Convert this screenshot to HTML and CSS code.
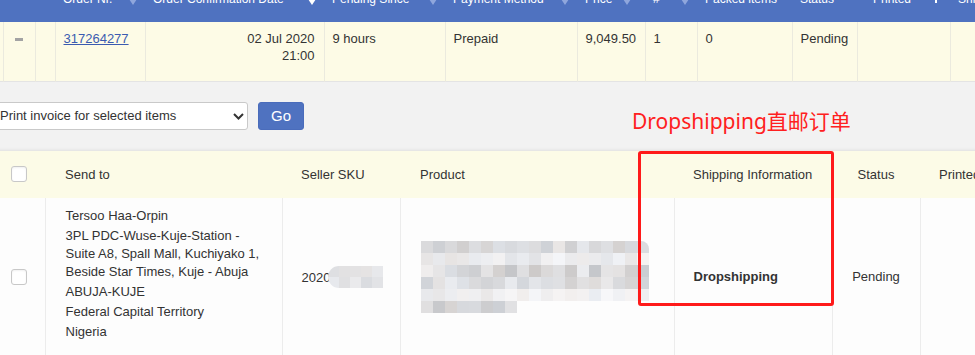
FILE: index.html
```html
<!DOCTYPE html>
<html lang="en">
  <head>
    <meta charset="UTF-8" />
    <meta name="viewport" content="width=device-width, initial-scale=1.0" />
    <title>Pending Orders</title>
    <link rel="stylesheet" href="styles.css">
  </head>
  <body>
    <div class="page">
      <table class="orders">
        <colgroup>
          <col style="width: 23px" /><col style="width: 32px" /><col style="width: 20px" />
          <col style="width: 90px" /><col style="width: 179px" /><col style="width: 121px" />
          <col style="width: 132px" /><col style="width: 68px" /><col style="width: 52px" />
          <col style="width: 95px" /><col style="width: 65px" /><col style="width: 93px" />
          <col style="width: 80px" />
        </colgroup>
        <thead>
          <tr>
            <th></th>
            <th></th>
            <th></th>
            <th>Order Nr.<span class="sort"></span></th>
            <th>Order Confirmation Date<span class="sort active"></span></th>
            <th>Pending Since<span class="sort"></span></th>
            <th>Payment Method<span class="sort"></span></th>
            <th class="price-head">Price<span class="sort"></span></th>
            <th>#<span class="sort"></span></th>
            <th>Packed items</th>
            <th>Status</th>
            <th class="printed-head">Printed<span class="up"></span></th>
            <th>Shipping</th>
          </tr>
        </thead>
        <tbody>
          <tr>
            <td></td>
            <td class="center"><span class="collapse"></span></td>
            <td></td>
            <td><a href="#" class="order-link">317264277</a></td>
            <td class="right">02 Jul 2020<br />21:00</td>
            <td>9 hours</td>
            <td>Prepaid</td>
            <td>9,049.50</td>
            <td>1</td>
            <td>0</td>
            <td>Pending</td>
            <td></td>
            <td></td>
          </tr>
        </tbody>
      </table>

      <div class="toolbar">
        <span class="select-wrap">
          <select class="action-select">
            <option>Print invoice for selected items</option>
          </select>
          <svg class="chevron" width="11" height="7" viewBox="0 0 11 7">
            <path d="M1 1l4.5 4.5L10 1" fill="none" stroke="#333" stroke-width="2" />
          </svg>
        </span>
        <button class="btn">Go</button>
      </div>

      <table class="items">
        <colgroup>
          <col style="width: 65px" /><col style="width: 237px" /><col style="width: 118px" />
          <col style="width: 274px" /><col style="width: 158px" /><col style="width: 88px" />
          <col style="width: 110px" />
        </colgroup>
        <thead>
          <tr>
            <th class="check-cell"><span class="checkbox"></span></th>
            <th class="wide-pad">Send to</th>
            <th>Seller SKU</th>
            <th class="wide-pad">Product</th>
            <th>Shipping Information</th>
            <th class="center">Status</th>
            <th>Printed</th>
          </tr>
        </thead>
        <tbody>
          <tr>
            <td class="check-cell"><span class="checkbox"></span></td>
            <td class="wide-pad address-cell">
              <div class="addr">Tersoo Haa-Orpin</div>
              <div class="addr">3PL PDC-Wuse-Kuje-Station -<br />Suite A8, Spall Mall, Kuchiyako 1,<br />Beside Star Times, Kuje - Abuja</div>
              <div class="addr">ABUJA-KUJE</div>
              <div class="addr">Federal Capital Territory</div>
              <div class="addr">Nigeria</div>
            </td>
            <td><span class="sku">2020</span><span class="mosaic sku-blur" id="sku-blur"></span></td>
            <td class="wide-pad"><div class="mosaic product-blur" id="product-blur"></div></td>
            <td><strong>Dropshipping</strong></td>
            <td class="center">Pending</td>
            <td></td>
          </tr>
        </tbody>
      </table>

      <div class="note">Dropshipping直邮订单</div>
      <div class="mark"></div>
    </div>

    <script>
      // Pixelated placeholders for the blurred product image and SKU
      var seed = 7;
      function rand() {
        seed = (seed * 9301 + 49297) % 233280;
        return seed / 233280;
      }

      function mosaic(id, rows, size) {
        var el = document.getElementById(id);
        rows.forEach(function (row) {
          var line = document.createElement("div");
          line.className = "mosaic-row";
          for (var i = 0; i < row.count; i++) {
            var tile = document.createElement("span");
            var g = Math.round(row.lo + rand() * (row.hi - row.lo));
            var tint = Math.round((rand() - 0.5) * 6);
            tile.style.width = size + "px";
            tile.style.height = size + "px";
            tile.style.background =
              "rgb(" + (g + tint) + "," + g + "," + (g - tint + 2) + ")";
            line.appendChild(tile);
          }
          el.appendChild(line);
        });
      }

      mosaic("product-blur", [
        { count: 19, lo: 205, hi: 232 },
        { count: 19, lo: 226, hi: 246 },
        { count: 19, lo: 198, hi: 240 },
        { count: 19, lo: 210, hi: 240 },
        { count: 19, lo: 230, hi: 247 },
        { count: 8, lo: 200, hi: 226 }
      ], 12);

      mosaic("sku-blur", [
        { count: 5, lo: 222, hi: 238 },
        { count: 5, lo: 218, hi: 236 }
      ], 11);
    </script>
  </body>
</html>
```

FILE: styles.css
```css
html,
body {
  overflow: hidden;
}
body {
  font-family: "Liberation Sans", Arial, sans-serif;
  font-size: 13px;
  color: #333;
  margin: 0;
  background-color: #f2f2f2;
}
.page {
  position: relative;
  width: 1100px;
  margin: -23px 0 0 -20px;
}

/* order summary table */
.orders {
  width: 1050px;
  table-layout: fixed;
  border-collapse: collapse;
  border-bottom: 1px solid #e4e4e4;
}
.orders th {
  background-color: #4f72c0;
  color: #fff;
  font-size: 12px;
  font-weight: normal;
  text-align: left;
  white-space: nowrap;
  overflow: hidden;
  padding: 14px 8px;
  line-height: 17px;
}
.orders th.price-head {
  padding-right: 14px;
}
.orders th.printed-head {
  padding-left: 16px;
}
.sort {
  float: right;
  margin-top: 8px;
  width: 0;
  height: 0;
  border-left: 4px solid transparent;
  border-right: 4px solid transparent;
  border-top: 6px solid #8fa6dc;
}
.sort.active {
  border-top-color: #fff;
}
.up {
  display: inline-block;
  width: 2px;
  height: 10px;
  margin-left: 24px;
  background-color: #fff;
  vertical-align: top;
  margin-top: 2px;
}
.orders tbody tr {
  height: 59px;
}
.orders td {
  background-color: #fdfbe6;
  border-left: 1px solid #ebeade;
  vertical-align: top;
  padding: 8px;
  line-height: 17px;
}
.orders td:first-child {
  border-left: none;
}
.orders .center {
  text-align: center;
}
.orders .right {
  text-align: right;
  padding-right: 9px;
}
.collapse {
  display: inline-block;
  width: 8px;
  height: 3px;
  background-color: #a3a3a3;
  vertical-align: middle;
}
.order-link {
  color: #3b5bb0;
  text-decoration: underline;
}

/* bulk action bar */
.toolbar {
  display: flex;
  align-items: center;
  gap: 10px;
  padding: 20px 0 21px 14px;
}
.select-wrap {
  position: relative;
  display: inline-block;
}
.action-select {
  appearance: none;
  -webkit-appearance: none;
  display: block;
  width: 254px;
  height: 28px;
  padding: 0 0 0 5px;
  border: 1px solid #c9c9c9;
  border-radius: 3px;
  background-color: #fff;
  font-family: "Liberation Sans", Arial, sans-serif;
  font-size: 13px;
  color: #333;
}
.chevron {
  position: absolute;
  right: 4px;
  top: 11px;
}
.btn {
  width: 46px;
  height: 28px;
  padding: 0;
  background-color: #4f72c0;
  border: 1px solid #4a6cbb;
  border-radius: 3px;
  color: #fff;
  font-family: "Liberation Sans", Arial, sans-serif;
  font-size: 15px;
}

/* line items table */
.items {
  width: 1050px;
  table-layout: fixed;
  border-collapse: collapse;
  box-shadow: 0 -1px 3px rgba(0, 0, 0, 0.08);
}
.items th {
  height: 47px;
  background-color: #fcfbe7;
  font-weight: normal;
  text-align: left;
  white-space: nowrap;
  overflow: hidden;
  padding: 0 19px;
  vertical-align: middle;
}
.items td {
  background-color: #fdfdfd;
  border-left: 1px solid #ececec;
  vertical-align: middle;
  padding: 13px 19px;
  white-space: nowrap;
}
.items td.address-cell {
  padding-top: 7px;
}
.items td:first-child {
  border-left: none;
}
.items .center {
  text-align: center;
}
.items .wide-pad {
  padding-left: 20px;
}
.items .check-cell {
  padding-left: 31px;
  padding-right: 0;
}
.checkbox {
  display: inline-block;
  width: 14px;
  height: 14px;
  border: 1px solid #c8c8c8;
  border-radius: 3px;
  background-color: #fff;
  box-shadow: inset 0 1px 2px rgba(0, 0, 0, 0.06);
  vertical-align: middle;
}
.addr {
  line-height: 18px;
  margin: 2px 0;
}
.sku {
  vertical-align: middle;
}
.mosaic-row {
  display: flex;
}
.mosaic-row span {
  display: block;
  flex: none;
}
.sku-blur {
  display: inline-block;
  vertical-align: middle;
  margin-left: -2px;
  border-radius: 11px 0 0 11px;
  overflow: hidden;
}
.product-blur {
  display: inline-block;
  vertical-align: middle;
  border-radius: 0 8px 0 0;
  overflow: hidden;
}

/* red annotation overlay */
.note {
  position: absolute;
  left: 652px;
  top: 130px;
  font-family: "Noto Sans", "Noto Sans CJK SC", sans-serif;
  font-size: 21px;
  line-height: 28px;
  color: #ff2020;
  white-space: nowrap;
}
.mark {
  position: absolute;
  left: 658px;
  top: 174px;
  width: 196px;
  height: 155px;
  box-sizing: border-box;
  border: 3px solid #ff1a1a;
  border-radius: 3px;
}
```
